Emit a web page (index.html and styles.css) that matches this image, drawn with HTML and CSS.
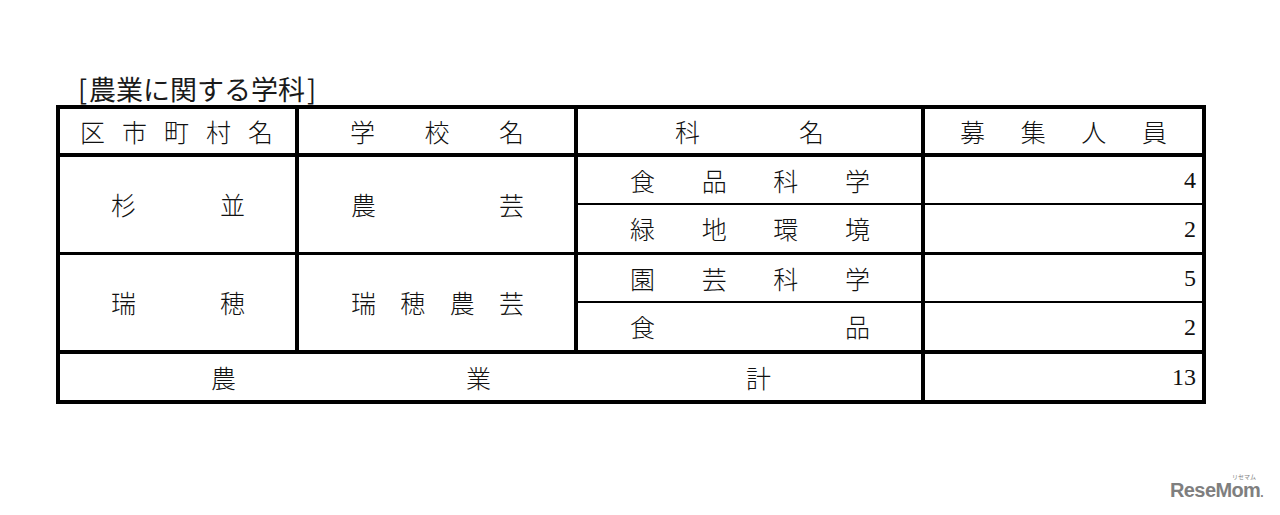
FILE: index.html
```html
<!DOCTYPE html>
<html lang="ja">
<head>
<meta charset="utf-8">
<title>農業に関する学科</title>
<link rel="stylesheet" href="styles.css">
</head>
<body>
<div class="page">
  <h1 class="title"><span class="br">[</span>農業に関する学科<span class="br">]</span></h1>
  <div class="grid">
    <div class="cell h1"><span>区</span><span>市</span><span>町</span><span>村</span><span>名</span></div>
    <div class="cell h2"><span>学</span><span>校</span><span>名</span></div>
    <div class="cell h3"><span>科</span><span>名</span></div>
    <div class="cell h4"><span>募</span><span>集</span><span>人</span><span>員</span></div>

    <div class="cell c1 rs t4"><span>杉</span><span>並</span></div>
    <div class="cell c2 rs t4"><span>農</span><span>芸</span></div>
    <div class="cell c3 t4"><span>食</span><span>品</span><span>科</span><span>学</span></div>
    <div class="cell num t4">4</div>
    <div class="cell c3 t2"><span>緑</span><span>地</span><span>環</span><span>境</span></div>
    <div class="cell num t2">2</div>

    <div class="cell c1 rs t3"><span>瑞</span><span>穂</span></div>
    <div class="cell c2 rs t3"><span>瑞</span><span>穂</span><span>農</span><span>芸</span></div>
    <div class="cell c3 t3"><span>園</span><span>芸</span><span>科</span><span>学</span></div>
    <div class="cell num t3">5</div>
    <div class="cell c3 t2"><span>食</span><span>品</span></div>
    <div class="cell num t2">2</div>

    <div class="cell total t4"><span>農</span><span class="mid">業</span><span class="end">計</span></div>
    <div class="cell num t4">13</div>
  </div>
  <div class="logo"><span class="kana">リセマム</span>ReseMom<span class="dot">.</span></div>
</div>
</body>
</html>
```

FILE: styles.css
```css
html, body {
  margin: 0;
  padding: 0;
  background: #fff;
}

.page {
  position: relative;
  width: 1280px;
  height: 515px;
  box-sizing: border-box;
  padding: 74px 0 0 56px;
  font-family: "Noto Sans CJK JP", "Noto Sans", sans-serif;
  color: #111;
}

.title {
  margin: 0 0 1px 20px;
  font-size: 27px;
  line-height: 30px;
  font-weight: 400;
  color: #1a1a1a;
}

.title .br {
  display: inline-block;
  width: 13px;
  text-align: center;
}

.grid {
  display: grid;
  width: 1150px;
  box-sizing: border-box;
  padding: 4px;
  background: #000;
  column-gap: 4px;
  row-gap: 0;
  grid-template-columns: 235px 275px 343px 277px;
  grid-template-rows: 44px 50px 49px 49px 49px 50px;
}

.cell {
  background: #fff;
  display: flex;
  align-items: center;
  justify-content: space-between;
  font-size: 25px;
  font-weight: 300;
  line-height: 1;
  color: #111;
}

.rs { grid-row: span 2; }

.total {
  grid-column: span 3;
  justify-content: flex-start;
  padding-left: 151px;
}
.total .mid { margin-left: 230px; }
.total .end { margin-left: 255px; }

.t4 { margin-top: 4px; }
.t3 { margin-top: 3px; }
.t2 { margin-top: 2px; }

.h1 { padding: 0 22px 0 20px; }
.h2 { padding: 0 50px 0 51px; }
.h3 { padding: 0 97px; }
.h4 { padding: 0 35px; }
.c1 { padding: 0 50px 0 51px; }
.c2 { padding: 0 50px 0 52px; }
.c3 { padding: 0 51px 0 52px; }

.num {
  justify-content: flex-end;
  padding-right: 6px;
  font-family: "Liberation Serif", serif;
  font-weight: 400;
  font-size: 24px;
}

.logo {
  position: absolute;
  left: 1170px;
  top: 478px;
  font-family: "Liberation Sans", "DejaVu Sans", sans-serif;
  font-weight: 700;
  font-size: 20px;
  line-height: 24px;
  letter-spacing: -0.6px;
  color: #7f7f7f;
}

.logo .kana {
  position: absolute;
  left: 62px;
  top: -4px;
  font-family: "Noto Sans CJK JP", sans-serif;
  font-size: 6px;
  line-height: 6px;
  letter-spacing: 0;
  font-weight: 400;
}

.logo .dot {
  font-size: 12px;
}
```
